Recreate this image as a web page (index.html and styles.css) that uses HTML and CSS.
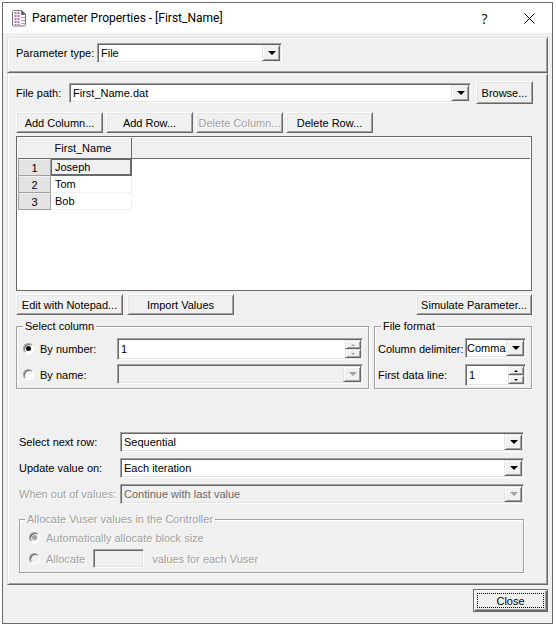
FILE: index.html
```
<!DOCTYPE html>
<html lang="en">
<head>
  <meta charset="UTF-8">
  <meta name="viewport" content="width=device-width, initial-scale=1.0">
  <title>Parameter Properties</title>
  <link rel="stylesheet" href="styles.css">
</head>
<body>
  <div class="dialog">
    <header class="titlebar">
      <svg class="app-icon" width="15" height="17" viewBox="0 0 15 17">
        <path d="M1.500.5h8l4 4v10.500l-1 1h-11l-1-1v-13.500z" fill="#f6f4f6" stroke="#777"/>
        <path d="M9.500.5v4H14z" fill="#555" stroke="#777"/>
        <path d="M3.500 2v13M6.500 2v13" stroke="#b878b8" stroke-width="2" stroke-dasharray="2 1"/>
        <path d="M9 7.500h4M9 10.500h4M9 13.500h4" stroke="#aaa"/>
      </svg>
      <h1>Parameter Properties - [First_Name]</h1>
      <button class="title-btn" aria-label="Help">?</button>
      <button class="title-btn" aria-label="Close window">
        <svg width="11" height="11" viewBox="0 0 11 11"><path d="M.5.5l10 10M10.500.5l-10 10" stroke="#000" fill="none"/></svg>
      </button>
    </header>

    <main class="content">
      <section class="panel type-panel">
        <label for="type">Parameter type:</label>
        <span class="combo type-combo"><select id="type"><option>File</option></select></span>
      </section>

      <section class="panel main-panel">
        <div class="path-row">
          <label for="path">File path:</label>
          <span class="combo"><input type="text" id="path" value="First_Name.dat"></span>
          <button class="btn browse">Browse...</button>
        </div>

        <div class="btn-row">
          <button class="btn">Add Column...</button>
          <button class="btn">Add Row...</button>
          <button class="btn" disabled>Delete Column...</button>
          <button class="btn">Delete Row...</button>
        </div>

        <div class="grid-box">
          <table>
            <thead>
              <tr><th class="num"></th><th class="name">First_Name</th><th></th></tr>
            </thead>
            <tbody>
              <tr><th>1</th><td class="selected">Joseph</td><td class="rest"></td></tr>
              <tr><th>2</th><td>Tom</td><td class="rest"></td></tr>
              <tr><th>3</th><td>Bob</td><td class="rest"></td></tr>
            </tbody>
          </table>
        </div>

        <div class="btn-row wide">
          <button class="btn">Edit with Notepad...</button>
          <button class="btn">Import Values</button>
          <button class="btn simulate">Simulate Parameter...</button>
        </div>

        <div class="groups">
          <fieldset class="select-column">
            <legend>Select column</legend>
            <div class="fields">
              <label><input type="radio" name="col" checked>By number:</label>
              <span class="spin off">
                <input type="number" value="1" aria-label="Column number">
                <span class="arrows"><button class="up" aria-label="Up" disabled></button><button class="down" aria-label="Down" disabled></button></span>
              </span>
              <label><input type="radio" name="col">By name:</label>
              <span class="combo off"><select disabled aria-label="Column name"></select></span>
            </div>
          </fieldset>
          <fieldset class="file-format">
            <legend>File format</legend>
            <div class="fields">
              <label for="delim">Column delimiter:</label>
              <span class="combo"><select id="delim"><option>Comma</option></select></span>
              <label for="line">First data line:</label>
              <span class="spin">
                <input type="number" id="line" value="1">
                <span class="arrows"><button class="up" aria-label="Up"></button><button class="down" aria-label="Down"></button></span>
              </span>
            </div>
          </fieldset>
        </div>

        <div class="options">
          <label for="next">Select next row:</label>
          <span class="combo"><select id="next"><option>Sequential</option></select></span>
          <label for="update">Update value on:</label>
          <span class="combo"><select id="update"><option>Each iteration</option></select></span>
          <label for="out" class="disabled">When out of values:</label>
          <span class="combo off"><select id="out" disabled><option>Continue with last value</option></select></span>
        </div>

        <fieldset class="allocate disabled" disabled>
          <legend>Allocate Vuser values in the Controller</legend>
          <div class="alloc-row">
            <label><input type="radio" name="alloc" checked>Automatically allocate block size</label>
          </div>
          <div class="alloc-row">
            <label><input type="radio" name="alloc">Allocate</label>
            <input type="text" id="block" class="block">
            <label for="block">values for each Vuser</label>
          </div>
        </fieldset>
      </section>

      <footer>
        <button class="btn close">Close</button>
      </footer>
    </main>
  </div>
</body>
</html>
```
FILE: styles.css
```
* {
  box-sizing: border-box;
}

body {
  margin: 0;
  padding: 2px 3px 3px 2px;
  background: #fff;
  font: 11px/14px "Liberation Sans", Arial, sans-serif;
  color: #000;
}

button, input, select {
  margin: 0;
  font: inherit;
  color: inherit;
}

.dialog {
  min-height: calc(100vh - 5px);
  border: 1px solid #696969;
  background: #f0f0f0;
}

/* title bar */
.titlebar {
  display: flex;
  align-items: center;
  height: 30px;
  padding-left: 9px;
  background: #fff;
}

.titlebar h1 {
  flex: 1;
  margin: 0 0 0 5px;
  font: 12px/16px Roboto, "Segoe UI", sans-serif;
}

.title-btn {
  display: flex;
  align-items: center;
  justify-content: center;
  width: 45px;
  height: 30px;
  padding: 0;
  border: none;
  background: none;
  font: 14px "Open Sans", "Segoe UI", sans-serif;
}

.content {
  padding: 4px;
}

/* raised boxes */
.panel {
  border: 1px solid;
  border-color: #e3e3e3 #696969 #696969 #e3e3e3;
  box-shadow: inset 1px 1px #fff, inset -1px -1px #a0a0a0;
}

.type-panel {
  display: flex;
  align-items: center;
  height: 36px;
  padding: 0 8px 4px;
}

.type-panel label {
  width: 81px;
}

.main-panel {
  padding: 7px 15px 11px 8px;
}

.btn {
  width: 87px;
  height: 21px;
  padding: 0;
  border: 1px solid;
  border-color: #fff #696969 #696969 #fff;
  background: #f0f0f0;
  box-shadow: inset 1px 1px #e3e3e3, inset -1px -1px #a0a0a0;
  white-space: nowrap;
}

.btn:disabled, .disabled {
  color: #a0a0a0;
  text-shadow: 1px 1px #fff;
}

/* sunken fields */
.combo, .spin, .block {
  display: flex;
  position: relative;
  min-width: 0;
  height: 20px;
  border: 1px solid;
  border-color: #a0a0a0 #fff #fff #a0a0a0;
  box-shadow: inset 1px 1px #696969, inset -1px -1px #e3e3e3;
  background: #fff;
}

.combo select, .combo input, .spin input {
  flex: 1;
  width: 100%;
  min-width: 0;
  padding: 0 0 0 3px;
  border: none;
  outline: none;
  appearance: none;
  background: none;
  opacity: 1;
}

.combo.off {
  background: #f0f0f0;
  color: #696969;
}

.combo::before {
  content: "";
  position: absolute;
  top: 1px;
  right: 1px;
  bottom: 1px;
  width: 16px;
  border: 1px solid;
  border-color: #e3e3e3 #696969 #696969 #e3e3e3;
  background: #f0f0f0;
  box-shadow: inset 1px 1px #fff, inset -1px -1px #a0a0a0;
  pointer-events: none;
}

.combo::after {
  content: "";
  position: absolute;
  top: 7px;
  right: 5px;
  border: 4px solid transparent;
  border-top-color: #000;
  border-bottom: none;
  pointer-events: none;
}

.combo.off::after {
  border-top-color: #a0a0a0;
}

.spin {
  height: 22px;
}

.spin input::-webkit-inner-spin-button {
  appearance: none;
}

.arrows {
  display: flex;
  flex: none;
  flex-direction: column;
  width: 17px;
  padding: 1px 1px 1px 0;
}

.arrows button {
  display: flex;
  flex: 1;
  align-items: center;
  justify-content: center;
  padding: 0;
  border: 1px solid;
  border-color: #e3e3e3 #696969 #696969 #e3e3e3;
  background: #f0f0f0;
  box-shadow: inset 1px 1px #fff, inset -1px -1px #a0a0a0;
  color: #000;
}

.arrows button:disabled {
  color: #a0a0a0;
}

.arrows button::after {
  content: "";
  border: 2px solid transparent;
}

.arrows .up::after {
  border-top: none;
  border-bottom-color: currentColor;
}

.arrows .down::after {
  border-bottom: none;
  border-top-color: currentColor;
}

.type-combo {
  width: 185px;
}

.path-row {
  display: flex;
  align-items: center;
  margin-right: -1px;
}

.path-row label {
  width: 53px;
}

.path-row .combo {
  flex: 1;
}

.browse {
  width: 57px;
  height: 23px;
  margin-left: 5px;
}

.btn-row {
  display: flex;
  gap: 3px;
  margin: 8px 0 3px;
}

.btn-row.wide {
  gap: 4px;
  margin: 3px 0 4px;
}

.wide .btn {
  width: 107px;
}

.wide .simulate {
  width: 116px;
  margin-left: auto;
}

/* data grid */
.grid-box {
  height: 155px;
  padding: 1px;
  border: 1px solid #696969;
  background: #fff;
}

table {
  width: 100%;
  border-collapse: separate;
  border-spacing: 0;
  table-layout: fixed;
}

th, td {
  height: 17px;
  padding: 0;
  font-weight: normal;
  line-height: 14px;
}

thead th {
  height: 21px;
  border-bottom: 1px solid #696969;
  background: #f0f0f0;
}

.num {
  width: 33px;
}

thead .name {
  width: 81px;
  padding-right: 16px;
  border-right: 1px solid #696969;
}

tbody th {
  border: 1px solid;
  border-color: #f0f0f0 #a0a0a0 #a0a0a0;
  background: #e3e3e3;
}

td {
  padding-left: 4px;
  border: solid #f0f0f0;
  border-width: 0 1px 1px 0;
}

td.selected {
  padding-left: 3px;
  border: 1px solid #696969;
  border-width: 1px 2px 2px 1px;
  background: #f0f0f0;
}

td.rest {
  border: none;
}

/* group boxes */
fieldset {
  min-width: 0;
  margin: 0;
  padding: 5px 5px 2px;
  border: 1px solid #a0a0a0;
  box-shadow: 1px 1px #fff, inset 1px 1px #fff;
}

legend {
  margin-left: 1px;
  padding: 0 2px;
  background: #f0f0f0;
}

.groups {
  display: flex;
  gap: 5px;
}

.select-column {
  flex: 1;
}

.file-format {
  width: 158px;
  padding-left: 3px;
}

.file-format legend {
  margin-left: 3px;
}

.fields {
  display: grid;
  grid-template-columns: 95px minmax(0, 1fr);
  grid-template-rows: 22px 22px;
  gap: 4px 0;
  align-items: start;
}

.fields label {
  display: flex;
  align-items: center;
  height: 21px;
}

.file-format .fields {
  grid-template-columns: 87px minmax(0, 1fr);
  white-space: nowrap;
}

.file-format select {
  padding-left: 1px;
}

input[type="radio"] {
  appearance: none;
  display: grid;
  place-items: center;
  width: 11px;
  height: 11px;
  margin: 0 6px 0 1px;
  border: 1px solid;
  border-color: #a0a0a0 #fff #fff #a0a0a0;
  border-radius: 50%;
  background: #fff;
  box-shadow: inset 1px 1px #696969;
}

input[type="radio"]:checked::after {
  content: "";
  width: 5px;
  height: 5px;
  border-radius: 50%;
  background: #000;
}

.disabled input[type="radio"] {
  background: #f0f0f0;
}

.disabled input[type="radio"]:checked::after {
  background: #a0a0a0;
}

.options {
  display: grid;
  grid-template-columns: 101px minmax(0, 1fr);
  gap: 6px 0;
  align-items: center;
  margin: 43px 8px 8px 3px;
}

.allocate {
  margin: 0 8px 0 3px;
  padding: 2px 8px 4px;
}

.allocate legend {
  margin-left: -3px;
}

.alloc-row {
  display: flex;
  align-items: center;
  gap: 8px;
  height: 19px;
}

.alloc-row + .alloc-row {
  margin-top: 2px;
}

.alloc-row label {
  display: flex;
  align-items: center;
}

.block {
  width: 51px;
  height: 19px;
  background: #f0f0f0;
}

footer {
  display: flex;
  justify-content: flex-end;
  padding-top: 4px;
}

.close {
  width: 75px;
  height: 23px;
  border-color: #696969;
  box-shadow: inset 1px 1px #fff, inset -1px -1px #696969, inset -2px -2px #a0a0a0;
  outline: 1px dotted #000;
  outline-offset: -5px;
}
```
